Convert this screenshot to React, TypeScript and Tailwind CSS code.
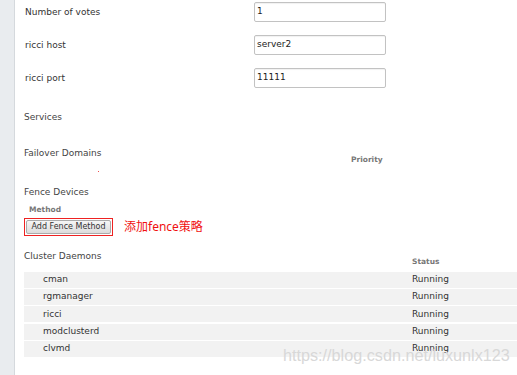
import React from "react";

const fields = [
  { label: "Number of votes", value: "1" },
  { label: "ricci host", value: "server2" },
  { label: "ricci port", value: "11111" },
];

const daemons = ["cman", "rgmanager", "ricci", "modclusterd", "clvmd"];

export default function App() {
  return (
    <div className="relative flex w-[517px] h-[375px] overflow-hidden bg-white text-[#333] font-['DejaVu_Sans',sans-serif]">
      <div className="w-[15px] shrink-0 bg-[#e9ecef] border-r border-[#d5d9dd]" />
      <main className="flex-1 pl-[9px] pt-[2px]">
        <div className="grid grid-cols-[230px_132px] gap-y-[13px] items-center">
          {fields.map(f => <React.Fragment key={f.label}>
              <span className="text-[9px] leading-[11px] pl-px">{f.label}</span>
              <div className="h-[20px] border border-[#c2c2c2] rounded-[2px] shadow-[inset_0_1px_1px_rgba(0,0,0,0.06)] px-[2px] flex items-center text-[9px] text-[#222]">
                {f.value}
              </div>
            </React.Fragment>)}
        </div>

        <div className="mt-[24px] text-[9px] leading-[11px] text-[#444]">Services</div>

        <div className="mt-[25px] flex items-start">
          <span className="w-[327px] text-[9px] leading-[11px] text-[#444]">Failover Domains</span>
          <span className="mt-[7px] text-[7.5px] leading-[10px] font-bold text-[#777]">Priority</span>
        </div>
        <div className="ml-[74px] mt-[6px] w-px h-px bg-[#f05050]" />

        <div className="mt-[15px] text-[9px] leading-[11px] text-[#444]">Fence Devices</div>
        <div className="mt-[6.5px] ml-[5px] text-[7.5px] leading-[10px] font-bold text-[#777]">Method</div>
        <div className="mt-[3px] flex items-center">
          <div className="flex w-[89px] h-[18px] border border-[#e22] p-px">
            <div className="flex-1 flex items-center justify-center whitespace-nowrap border border-[#aaa] rounded-[2px] bg-gradient-to-b from-[#f6f6f6] to-[#dcdcdc] text-[8px] text-[#333] leading-none">
              Add Fence Method
            </div>
          </div>
          <span className="ml-[11px] text-[12px] text-[#f01010] font-['Noto_Sans','Noto_Sans_CJK_SC',sans-serif] leading-none">添加fence策略</span>
        </div>

        <div className="mt-[15.5px] flex items-start">
          <span className="w-[388px] text-[9px] leading-[11px] text-[#444]">Cluster Daemons</span>
          <span className="mt-[6px] text-[7.5px] leading-[10px] font-bold text-[#777]">Status</span>
        </div>
        <div className="mt-[4.5px] flex flex-col gap-[1.4px]">
          {daemons.map(d => <div key={d} className="flex items-center h-[16px] bg-[#f2f2f2] text-[9px]">
              <span className="w-[388px] pl-[19px]">{d}</span>
              <span>Running</span>
            </div>)}
        </div>
      </main>
      <div className="absolute left-[283px] top-[345px] text-[16.2px] leading-[20px] text-[#d8d8d8] font-['Liberation_Sans',sans-serif]">
        https://blog.csdn.net/luxunlx123
      </div>
    </div>
  );
}
